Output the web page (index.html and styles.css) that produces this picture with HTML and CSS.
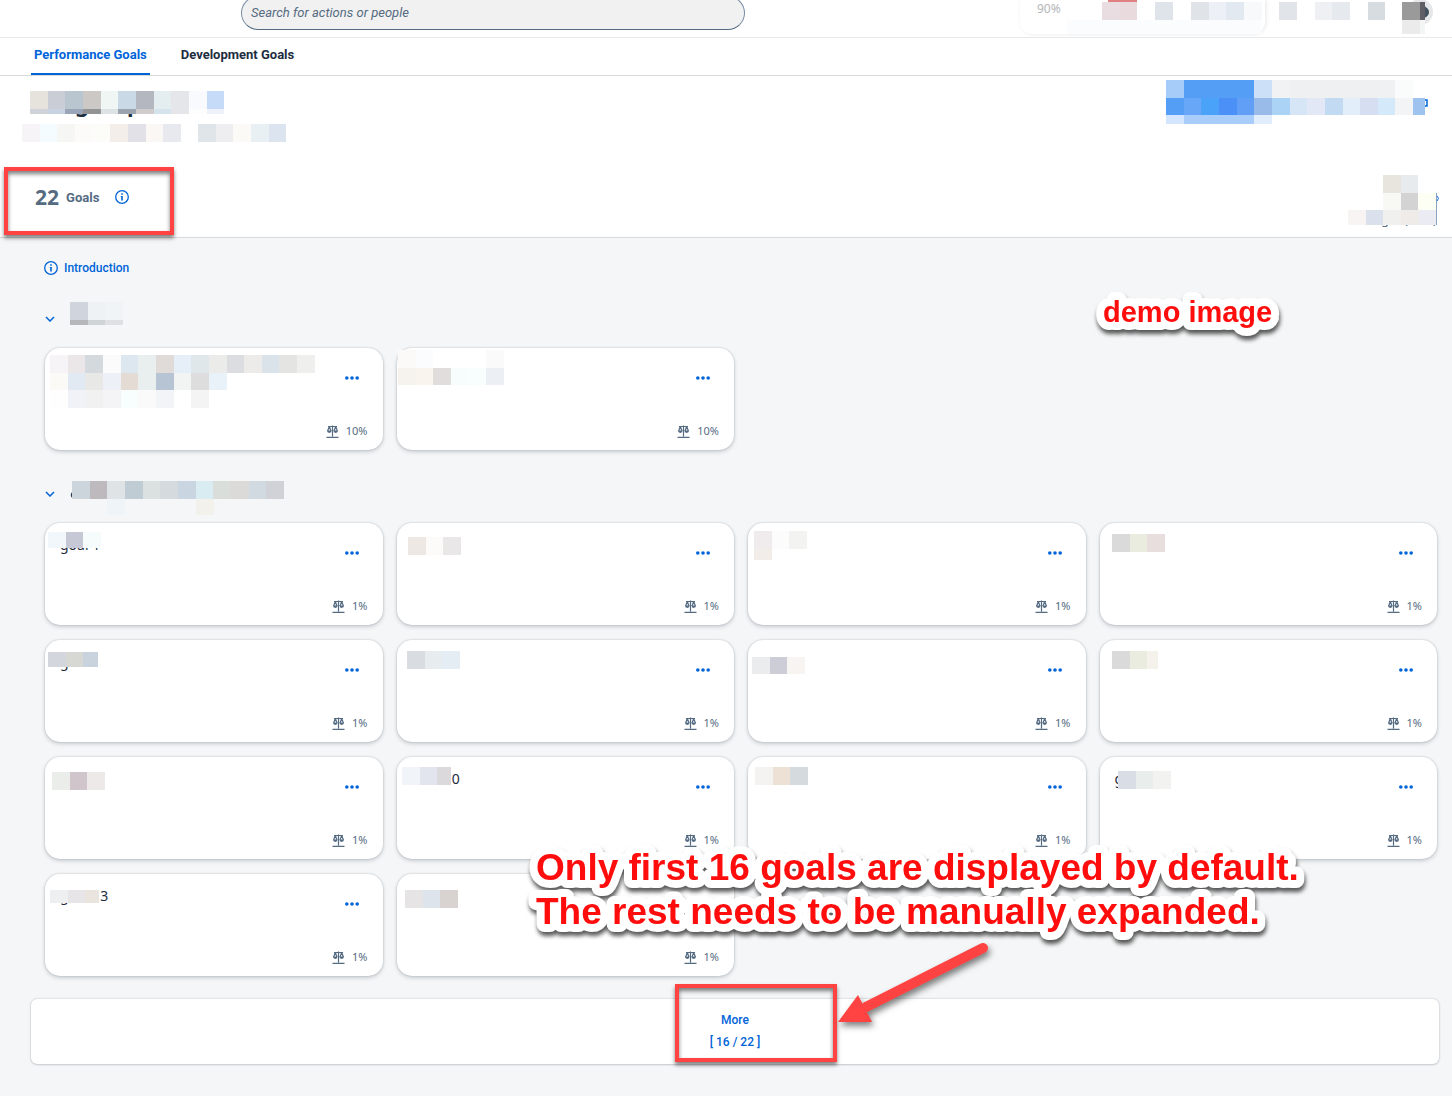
FILE: index.html
```html
<!DOCTYPE html>
<html lang="en">
<head>
    <meta charset="UTF-8">
    <meta name="viewport" content="width=device-width, initial-scale=1.0">
    <title>Performance Goals</title>
    <link rel="stylesheet" href="styles.css">
</head>
<body>
    <!-- shared icons -->
    <svg class="icon-defs" aria-hidden="true">
        <symbol id="icon-info" viewBox="0 0 14 14">
            <circle cx="7" cy="7" r="6.3" fill="none" stroke="currentColor" stroke-width="1.3"/>
            <path d="M6.2 3.3h1.6v1.5H6.2zM5.8 6h2v4.5H6.2V7.1h-.4z" fill="currentColor"/>
        </symbol>
        <symbol id="icon-chevron" viewBox="0 0 10 6">
            <path d="M1 1l4 4 4-4" fill="none" stroke="currentColor" stroke-width="1.5"/>
        </symbol>
        <symbol id="icon-dots" viewBox="0 0 14 4">
            <circle cx="1.8" cy="2" r="1.8" fill="currentColor"/>
            <circle cx="7" cy="2" r="1.8" fill="currentColor"/>
            <circle cx="12.2" cy="2" r="1.8" fill="currentColor"/>
        </symbol>
        <symbol id="icon-scale" viewBox="0 0 13 13">
            <path d="M.5 12.3h12M6.5.5v11M2 1.5h9M3.3 1.5L1.6 6M3.3 1.5L5 6M9.7 1.5L8 6M9.7 1.5L11.4 6" fill="none" stroke="currentColor" stroke-width="1.2"/>
            <path d="M1 5.6h4.6a2.3 2.3 0 0 1-4.6 0zM7.4 5.6H12a2.3 2.3 0 0 1-4.6 0z" fill="currentColor"/>
        </symbol>
    </svg>

    <header class="shell">
        <input class="search" type="search" placeholder="Search for actions or people" aria-label="Search for actions or people">
        <div class="shell-tools">
            <div class="progress">90%</div>
            <svg class="mosaic overlay" width="420" height="37" data-rows="82,2,18:eadde1 e8dadd - dfe3ea|171,2,18:e0e4e8 edf1f7 e3e9f1 f8f9fb - e1e5e9 - eff0f4 e6eaee - d7dce0|47,20,14:fafcfd fafcfd fafcfd fafcfd fafcfd fafcfd fafcfd fafcfd fafcfd fafcfd fafcfd|382,2,18,23:9a9a9a 5f5f65|382,20,14,23:ebebeb f4f5f5">
                <rect x="88" y="0" width="29" height="2" fill="#e08083"/>
                <circle cx="400" cy="12" r="13" fill="#e6e7e9"/>
                <path d="M402 5q7 3 7 7t-5 6z" fill="#44525f"/>
            </svg>
        </div>
    </header>

    <nav class="tabs">
        <a class="tab active" href="#performance">Performance Goals</a>
        <a class="tab" href="#development">Development Goals</a>
    </nav>

    <section class="plan-header">
        <div class="plan-top">
            <svg class="mosaic" width="265" height="62" data-rows="8,11,18:e6e3dc cacdd6 b9c5cf cbc8c6 f0f6f4 cad9e6 b5b7c0 e4edef e5e6ea f9fafe c6dbf7|8,29,5:cfd2d9 c7d3e0 9ba5b9 929496 dde2e5 9ba4ae d0cccb d5e3ec e6e6ea fdfdfe edf2fd|0,44,18:f6f4f6 f5fcff f6f6f5 fcfbf9 fcfcf8 f4eeeb e2e1e8 fbf7f4 e7e9ef|176,44,18:e0e5e9 eeeef0 fbfaf6 e8f0f4 dce4ef">
                <text class="plan-title" x="53" y="32">g</text>
                <text class="plan-title" x="105" y="32">p</text>
            </svg>
            <svg class="mosaic" width="264" height="62" data-rows="0,0,18:a6cdf9 559ef6 559ef6 559ef6 559ef6 cce0f8 f1f2f4 eff0f2 eff0f2 eff0f2 eff0f2 eff0f2 f0f1f3 fafcfb|0,18,17,259:559ef6 68a7f8 4aa3f8 4a90f7 619ff7 98bbea aad3f5 d7e6f7 e3e8f7 c3daf3 e2eef9 d5dff1 d4e9fa f2f4f6 9fc3ef|0,35,9:d4e6fd a9cdfb a9cdfb a9cdfb a9cdfb e0edfd">
                <path d="M258 18v12M258 20h3v6h-3" fill="none" stroke="#0064d9" stroke-width="1.5"/>
            </svg>
        </div>
        <div class="plan-stats">
            <div class="goal-count">
                <strong>22</strong>
                <span>Goals</span>
                <button class="icon-button" aria-label="About goals"><svg class="icon-info"><use href="#icon-info"/></svg></button>
            </div>
            <svg class="mosaic" width="92" height="53" data-rows="35,0,18:e8e5de e7ebee|35,18,17:f8f9f4 d3d3d4 fdfff5|0,35,15:f8f4f4 dae0ec f0f0ee efebe9 ebecf3">
                <text class="plan-note" x="33" y="49">g</text>
                <text class="plan-note" x="56" y="49">(</text>
                <text class="plan-note" x="85" y="49">)</text>
                <path d="M88.5 18v32" stroke="#8aa4c0"/>
                <path d="M89 21q3 2 0 5" fill="none" stroke="#0064d9"/>
            </svg>
        </div>
    </section>

    <main class="content">
        <a class="intro" href="#introduction"><svg class="icon-info"><use href="#icon-info"/></svg>Introduction</a>
        <svg class="callout callout-demo" width="200" height="56">
            <text x="14" y="34">demo image</text>
        </svg>

        <section class="goal-group">
            <div class="group-head">
                <button class="icon-button" aria-label="Collapse group"><svg class="icon-chevron"><use href="#icon-chevron"/></svg></button>
                <svg class="mosaic" width="230" height="46" data-rows="0,0,18:d0d4dc eef2f5 f0f4f7|0,18,5:b7b7bb cfd5d7 dee0e4"></svg>
            </div>
            <div class="cards">
                <article class="card">
                    <svg class="mosaic overlay" width="280" height="62" data-rows="5,7,18:f6f4f6 ebe6e8 d3d9dc fbfbfc dce7f0 e9eeee e0dad9 e6eff7 dfe7ea ebebe9 dcdde0 edebea dbe3ea e4e4e2 efefee|5,25,17:fbfaf6 e1eaf2 e8e8e7 edf1f7 e5dbd5 e9eeee b6c4d4 f2f4f4 dddddd e9f1f9|5,42,18:fefefe f0f2f7 f1f1f2 f4f4f7 f8fdfe fafafb f3f4f7 - f4f4f5"></svg>
                    <button class="card-menu" aria-label="Actions"><svg class="icon-dots"><use href="#icon-dots"/></svg></button>
                    <div class="weight"><svg class="icon-scale"><use href="#icon-scale"/></svg>10%</div>
                </article>
                <article class="card">
                    <svg class="mosaic overlay" width="280" height="62" data-rows="1,2,18:fcfaf8 fafcfe - - - fafafb|1,20,17:f6f3ee faf4ee e2dddd f6fdfc f8fdfd ecf0f5"></svg>
                    <button class="card-menu" aria-label="Actions"><svg class="icon-dots"><use href="#icon-dots"/></svg></button>
                    <div class="weight"><svg class="icon-scale"><use href="#icon-scale"/></svg>10%</div>
                </article>
            </div>
        </section>

        <section class="goal-group">
            <div class="group-head">
                <button class="icon-button" aria-label="Collapse group"><svg class="icon-chevron"><use href="#icon-chevron"/></svg></button>
                <svg class="mosaic" width="230" height="46" data-rows="2,4,18:cdd5dc bdb9bd dfe3e6 bfccd4 dbe0e1 d4dadd c9d5e0 d8ecf2 dadeda dcdad9 d1d9e1 d0d2d8|37,22,16:eff4f8|126,22,16:f3f1ec">
                    <path d="M3 15q-3 3 0 6" fill="none" stroke="#2b3a48" stroke-width="1.5"/>
                </svg>
            </div>
            <div class="cards">
                <article class="card">
                    <h3>goal 1</h3>
                    <svg class="mosaic overlay" width="280" height="62" data-rows="3,9,16:f2f7fc c6c8d5 f6fcfc"></svg>
                    <button class="card-menu" aria-label="Actions"><svg class="icon-dots"><use href="#icon-dots"/></svg></button>
                    <div class="weight"><svg class="icon-scale"><use href="#icon-scale"/></svg>1%</div>
                </article>
                <article class="card">
                    <svg class="mosaic overlay" width="280" height="62" data-rows="11,14,18:ede8e4 fcfbf9 e9e7e8"></svg>
                    <button class="card-menu" aria-label="Actions"><svg class="icon-dots"><use href="#icon-dots"/></svg></button>
                    <div class="weight"><svg class="icon-scale"><use href="#icon-scale"/></svg>1%</div>
                </article>
                <article class="card">
                    <svg class="mosaic overlay" width="280" height="62" data-rows="6,8,18:f0ebec fcfcfc f3f4f2|6,26,11:f3ede9"></svg>
                    <button class="card-menu" aria-label="Actions"><svg class="icon-dots"><use href="#icon-dots"/></svg></button>
                    <div class="weight"><svg class="icon-scale"><use href="#icon-scale"/></svg>1%</div>
                </article>
                <article class="card">
                    <svg class="mosaic overlay" width="280" height="62" data-rows="12,11,18:dadada ebece0 e8dedd"></svg>
                    <button class="card-menu" aria-label="Actions"><svg class="icon-dots"><use href="#icon-dots"/></svg></button>
                    <div class="weight"><svg class="icon-scale"><use href="#icon-scale"/></svg>1%</div>
                </article>
                <article class="card">
                    <h3>g</h3>
                    <svg class="mosaic overlay" width="280" height="62" data-rows="3,12,15,50:d3d6dd d7d7d4 c9d3dd"></svg>
                    <button class="card-menu" aria-label="Actions"><svg class="icon-dots"><use href="#icon-dots"/></svg></button>
                    <div class="weight"><svg class="icon-scale"><use href="#icon-scale"/></svg>1%</div>
                </article>
                <article class="card">
                    <svg class="mosaic overlay" width="280" height="62" data-rows="10,11,18:d9dde1 e7ecef e4ecf4"></svg>
                    <button class="card-menu" aria-label="Actions"><svg class="icon-dots"><use href="#icon-dots"/></svg></button>
                    <div class="weight"><svg class="icon-scale"><use href="#icon-scale"/></svg>1%</div>
                </article>
                <article class="card">
                    <svg class="mosaic overlay" width="280" height="62" data-rows="4,17,17:ebecee cdcdd7 f8f4f2"></svg>
                    <button class="card-menu" aria-label="Actions"><svg class="icon-dots"><use href="#icon-dots"/></svg></button>
                    <div class="weight"><svg class="icon-scale"><use href="#icon-scale"/></svg>1%</div>
                </article>
                <article class="card">
                    <svg class="mosaic overlay" width="280" height="62" data-rows="12,11,18,46:dadada ebece0 f5f2ec"></svg>
                    <button class="card-menu" aria-label="Actions"><svg class="icon-dots"><use href="#icon-dots"/></svg></button>
                    <div class="weight"><svg class="icon-scale"><use href="#icon-scale"/></svg>1%</div>
                </article>
                <article class="card">
                    <svg class="mosaic overlay" width="280" height="62" data-rows="7,15,18:ebedea cfc5cb eee9e9"></svg>
                    <button class="card-menu" aria-label="Actions"><svg class="icon-dots"><use href="#icon-dots"/></svg></button>
                    <div class="weight"><svg class="icon-scale"><use href="#icon-scale"/></svg>1%</div>
                </article>
                <article class="card">
                    <h3>goal 10</h3>
                    <svg class="mosaic overlay" width="280" height="62" data-rows="5,10,18,49:f1f4f9 e2e5ed dcd9dd"><rect x="12" y="28" width="42" height="6" fill="#fff"/></svg>
                    <button class="card-menu" aria-label="Actions"><svg class="icon-dots"><use href="#icon-dots"/></svg></button>
                    <div class="weight"><svg class="icon-scale"><use href="#icon-scale"/></svg>1%</div>
                </article>
                <article class="card">
                    <svg class="mosaic overlay" width="280" height="62" data-rows="7,10,18:f4f3f1 ede0d5 d5dade"></svg>
                    <button class="card-menu" aria-label="Actions"><svg class="icon-dots"><use href="#icon-dots"/></svg></button>
                    <div class="weight"><svg class="icon-scale"><use href="#icon-scale"/></svg>1%</div>
                </article>
                <article class="card">
                    <h3>g</h3>
                    <svg class="mosaic overlay" width="280" height="62" data-rows="18,14,18:d9dee6 e9edec f2f2f1"></svg>
                    <button class="card-menu" aria-label="Actions"><svg class="icon-dots"><use href="#icon-dots"/></svg></button>
                    <div class="weight"><svg class="icon-scale"><use href="#icon-scale"/></svg>1%</div>
                </article>
                <article class="card">
                    <h3>goal 13</h3>
                    <svg class="mosaic overlay" width="280" height="62" data-rows="5,16,13,49:eeeff1 e7e5e8 eae4df"></svg>
                    <button class="card-menu" aria-label="Actions"><svg class="icon-dots"><use href="#icon-dots"/></svg></button>
                    <div class="weight"><svg class="icon-scale"><use href="#icon-scale"/></svg>1%</div>
                </article>
                <article class="card">
                    <svg class="mosaic overlay" width="280" height="62" data-rows="8,16,18:e6e4e5 dde4ec d8d3d0"></svg>
                    <button class="card-menu" aria-label="Actions"><svg class="icon-dots"><use href="#icon-dots"/></svg></button>
                    <div class="weight"><svg class="icon-scale"><use href="#icon-scale"/></svg>1%</div>
                </article>
            </div>
        </section>

        <div class="more-panel">
            <button class="more">More<br>[ 16 / 22 ]</button>
            <div class="more-frame"></div>
            <svg class="arrow" width="164" height="96" viewBox="0 0 164 96" aria-hidden="true">
                <path d="M153 8L36 67" stroke="#ff4343" stroke-width="10" stroke-linecap="round"/>
                <path d="M8 82l20-27 14 27z" fill="#ff4343"/>
            </svg>
            <svg class="callout callout-more" width="800" height="120">
                <text x="14" y="44">Only first 16 goals are displayed by default.</text>
                <text x="14" y="88">The rest needs to be manually expanded.</text>
            </svg>
        </div>
    </main>

    <script src="mosaic.js"></script>
</body>
</html>
```
FILE: styles.css
```css
* {
    box-sizing: border-box;
}

body {
    margin: 0;
    min-height: 100vh;
    background-color: #f5f6f7;
    color: #1d2d3e;
    font-family: "Noto Sans", "Open Sans", sans-serif;
    font-size: 13px;
}

button {
    padding: 0;
    border: none;
    background: none;
    color: #0064d9;
    font-family: inherit;
    cursor: pointer;
}

a {
    color: #0064d9;
    text-decoration: none;
}

.icon-defs {
    display: none;
}

.mosaic {
    display: block;
    flex-shrink: 0;
}

.overlay {
    position: absolute;
    top: 0;
    left: 0;
    pointer-events: none;
}

.icon-info {
    display: block;
    width: 14px;
    height: 14px;
}

.icon-chevron {
    display: block;
    width: 10px;
    height: 6px;
}

.icon-dots {
    display: block;
    width: 14px;
    height: 4px;
}

.icon-scale {
    width: 13px;
    height: 13px;
}

/* top bar */
.shell {
    display: flex;
    justify-content: space-between;
    height: 38px;
    padding: 0 12px 0 241px;
    background-color: #fff;
    border-bottom: 1px solid #e8e9ea;
    overflow: hidden;
}

.search {
    width: 504px;
    height: 34px;
    margin-top: -4px;
    padding: 0 9px 2px;
    border: 1px solid #758ca4;
    border-bottom-color: #556b82;
    border-radius: 17px;
    background-color: #f1f1f1;
    font-family: Roboto, sans-serif;
    font-size: 13px;
    font-style: italic;
}

.search::placeholder {
    color: #556b82;
}

.shell-tools {
    position: relative;
    width: 420px;
}

.progress {
    width: 245px;
    height: 34px;
    padding-left: 17px;
    border-radius: 0 0 12px 12px;
    box-shadow: 1px 0 4px rgba(0, 0, 0, 0.1);
    color: #b4b6b9;
    font-size: 12px;
    line-height: 18px;
}

/* tabs */
.tabs {
    display: flex;
    gap: 28px;
    height: 38px;
    padding: 0 31px;
    background-color: #fff;
    border-bottom: 1px solid #d9dadb;
}

.tab {
    padding: 0 3px;
    border-bottom: 2px solid transparent;
    color: #1d2d3e;
    font-family: Roboto, sans-serif;
    font-weight: 700;
    line-height: 34px;
}

.tab.active {
    border-bottom-color: #0064d9;
    color: #0064d9;
}

/* plan header */
.plan-header {
    padding: 4px 0 2px;
    background-color: #fff;
    border-bottom: 1px solid #d9dadb;
}

.plan-top {
    display: flex;
    justify-content: space-between;
    padding: 0 22px;
}

.plan-title {
    fill: #1d2d3e;
    font-size: 22px;
    font-weight: 700;
}

.plan-note {
    fill: #556b82;
    font-size: 13px;
}

.plan-stats {
    display: flex;
    justify-content: space-between;
    align-items: center;
    margin-top: 25px;
    padding: 0 12px 0 4px;
}

.goal-count {
    display: flex;
    align-items: center;
    height: 68px;
    padding: 0 41px 8px 27px;
    border: 4px solid #ff4343;
    box-shadow: 0 3px 4px rgba(0, 0, 0, 0.5), inset 0 3px 4px rgba(0, 0, 0, 0.5);
    color: #556b82;
}

.goal-count strong {
    font-size: 21px;
    line-height: 28px;
}

.goal-count span {
    margin: 0 16px 0 7px;
    font-family: Roboto, sans-serif;
    font-weight: 700;
}

/* goals */
.content {
    position: relative;
    padding: 20px 13px 32px 31px;
}

.intro {
    display: flex;
    align-items: center;
    gap: 6px;
    height: 20px;
    margin: 0 13px 24px;
    font-family: Roboto, sans-serif;
    font-size: 12px;
    font-weight: 500;
}

.goal-group {
    margin: 0 2px 27px 14px;
}

.group-head {
    display: flex;
    gap: 15px;
    height: 46px;
}

.group-head .icon-button {
    height: 34px;
}

.cards {
    display: grid;
    grid-template-columns: repeat(4, 1fr);
    gap: 15px 14px;
}

.card {
    position: relative;
    display: grid;
    grid-template-columns: 1fr auto;
    align-content: space-between;
    min-height: 102px;
    padding: 13px 15px 10px;
    background-color: #fff;
    border-radius: 15px;
    box-shadow: 0 0 2px rgba(34, 53, 72, 0.25), 0 2px 4px rgba(34, 53, 72, 0.2);
}

.card h3 {
    margin: 0;
    font-size: 14px;
    font-weight: 400;
    line-height: 18px;
}

.card-menu {
    grid-column: 2;
    height: 34px;
    padding: 0 9px;
}

.weight {
    grid-column: 1 / 3;
    display: flex;
    justify-content: flex-end;
    align-items: center;
    gap: 7px;
    color: #556b82;
    font-size: 11px;
    line-height: 18px;
}

/* more */
.more-panel {
    position: relative;
    display: flex;
    justify-content: center;
    margin-top: -4px;
    padding: 10px 10px 11px;
    background-color: #fff;
    border-radius: 6px;
    box-shadow: 0 0 2px rgba(34, 53, 72, 0.3), 0 1px 2px rgba(34, 53, 72, 0.15);
}

.more {
    font-family: Roboto, sans-serif;
    font-size: 12px;
    font-weight: 500;
    line-height: 22px;
}

.more-frame {
    position: absolute;
    top: -15px;
    left: calc(50% - 60px);
    width: 162px;
    height: 78px;
    border: 4px solid #ff4343;
    box-shadow: 0 3px 4px rgba(0, 0, 0, 0.5), inset 0 3px 4px rgba(0, 0, 0, 0.5);
    pointer-events: none;
}

.arrow {
    position: absolute;
    top: -59px;
    left: calc(50% + 95px);
    filter: drop-shadow(2px 4px 3px rgba(0, 0, 0, 0.5));
    pointer-events: none;
}

.callout {
    position: absolute;
    overflow: visible;
    fill: #ff0d0d;
    stroke: #fff;
    stroke-width: 16px;
    stroke-linejoin: round;
    paint-order: stroke;
    font-family: "Liberation Sans", Arial, sans-serif;
    font-weight: 700;
    filter: drop-shadow(1px 4px 2px rgba(0, 0, 0, 0.65));
    pointer-events: none;
}

.callout-demo {
    top: 50px;
    right: 163px;
    font-size: 29px;
}

.callout-more {
    top: -163px;
    left: calc(50% - 213px);
    font-size: 37px;
}
```
FILE: mosaic.js
```js
// Each row is "x,y,height[,width]:colors"; "-" leaves a cell empty
document.querySelectorAll("[data-rows]").forEach((svg) => {
    svg.dataset.rows.split("|").forEach((row) => {
        const [box, colors] = row.split(":");
        const [x, y, height, width] = box.split(",").map(Number);
        const cells = colors.split(" ");

        cells.forEach((color, i) => {
            if (color === "-") return;
            const start = Math.round(i * 17.65);
            let end = Math.round((i + 1) * 17.65);
            if (width && i === cells.length - 1) end = width;

            const rect = document.createElementNS("http://www.w3.org/2000/svg", "rect");
            rect.setAttribute("x", x + start);
            rect.setAttribute("y", y);
            rect.setAttribute("width", end - start);
            rect.setAttribute("height", height);
            rect.setAttribute("fill", "#" + color);
            svg.appendChild(rect);
        });
    });
});
```
